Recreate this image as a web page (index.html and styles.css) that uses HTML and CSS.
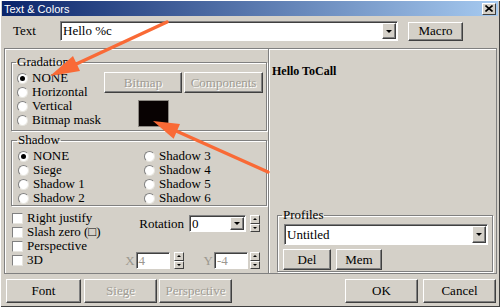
FILE: index.html
```html
<!DOCTYPE html>
<html lang="en">
<head>
    <meta charset="UTF-8">
    <title>Text &amp; Colors</title>
    <link rel="stylesheet" href="styles.css">
</head>
<body>
    <div class="window">
        <div class="titlebar">
            <span>Text &amp; Colors</span>
            <span class="close">
                <svg width="8" height="7" viewBox="0 0 8 7"><path d="M0.5 0.5 L7.5 6.5 M7.5 0.5 L0.5 6.5" stroke="#000" stroke-width="1.6"/></svg>
            </span>
        </div>

        <div class="text-row">
            <label class="text-label">Text</label>
            <div class="combo text-combo">
                <span class="value">Hello %c</span>
                <span class="drop"></span>
            </div>
            <button class="btn macro">Macro</button>
        </div>

        <div class="main">
            <div class="left">
                <fieldset class="group grad">
                    <legend>Gradation</legend>
                    <div class="grad-body">
                        <div class="radios">
                            <div class="opt"><span class="radio on"></span>NONE</div>
                            <div class="opt"><span class="radio"></span>Horizontal</div>
                            <div class="opt"><span class="radio"></span>Vertical</div>
                            <div class="opt"><span class="radio"></span>Bitmap mask</div>
                        </div>
                        <div class="grad-tools">
                            <div class="btn-pair">
                                <button class="btn disabled bitmap">Bitmap</button>
                                <button class="btn disabled components">Components</button>
                            </div>
                            <div class="swatch"></div>
                        </div>
                    </div>
                </fieldset>

                <fieldset class="group shadow">
                    <legend>Shadow</legend>
                    <div class="shadow-grid">
                        <div class="opt"><span class="radio on"></span>NONE</div>
                        <div class="opt"><span class="radio"></span>Shadow 3</div>
                        <div class="opt"><span class="radio"></span>Siege</div>
                        <div class="opt"><span class="radio"></span>Shadow 4</div>
                        <div class="opt"><span class="radio"></span>Shadow 1</div>
                        <div class="opt"><span class="radio"></span>Shadow 5</div>
                        <div class="opt"><span class="radio"></span>Shadow 2</div>
                        <div class="opt"><span class="radio"></span>Shadow 6</div>
                    </div>
                </fieldset>

                <div class="options">
                    <div class="checks">
                        <div class="opt"><span class="check"></span>Right justify</div>
                        <div class="opt"><span class="check"></span>Slash zero (&#9633;)</div>
                        <div class="opt"><span class="check"></span>Perspective</div>
                        <div class="opt"><span class="check"></span>3D</div>
                    </div>
                    <div class="controls">
                        <div class="ctl-row">
                            <span>Rotation</span>
                            <div class="combo rot-combo">
                                <span class="value">0</span>
                                <span class="drop"></span>
                            </div>
                            <div class="spin"><span class="up"></span><span class="down"></span></div>
                        </div>
                        <div class="ctl-row">
                            <span class="dim">X</span>
                            <div class="field xy"><span class="value dim">4</span></div>
                            <div class="spin spin-x"><span class="up"></span><span class="down"></span></div>
                            <span class="dim y-label">Y</span>
                            <div class="field xy"><span class="value dim">-4</span></div>
                            <div class="spin spin-y"><span class="up"></span><span class="down"></span></div>
                        </div>
                    </div>
                </div>
            </div>

            <div class="right">
                <div class="preview">Hello ToCall</div>
                <fieldset class="group profiles">
                    <legend>Profiles</legend>
                    <div class="combo profile-combo">
                        <span class="value">Untitled</span>
                        <span class="drop"></span>
                    </div>
                    <div class="profile-buttons">
                        <button class="btn del">Del</button>
                        <button class="btn mem">Mem</button>
                    </div>
                </fieldset>
            </div>
        </div>

        <div class="footer">
            <div class="btn-group">
                <button class="btn font">Font</button>
                <button class="btn disabled siege">Siege</button>
                <button class="btn disabled persp">Perspective</button>
            </div>
            <div class="btn-group right-group">
                <button class="btn ok">OK</button>
                <button class="btn cancel">Cancel</button>
            </div>
        </div>

        <svg class="annotations" width="500" height="307" viewBox="0 0 500 307">
            <line x1="167" y1="22" x2="72" y2="66" stroke="#f96a36" stroke-width="3.5" stroke-linecap="round"/>
            <polygon points="50,76 80,71 73,56" fill="#f96a36"/>
            <line x1="268" y1="172" x2="174" y2="130" stroke="#f96a36" stroke-width="3.5" stroke-linecap="round"/>
            <polygon points="153,121 173.6,138.7 180,124.1" fill="#f96a36"/>
        </svg>
    </div>
</body>
</html>
```

FILE: styles.css
```css
*{
    margin:0;
    padding:0;
    box-sizing:border-box;
}

body{
    width:500px;
    height:307px;
    overflow:hidden;
    background-color:#d4d0c8;
    font-family:"Liberation Serif", serif;
    font-size:13px;
    line-height:14px;
    color:#000;
}

.window{
    position:relative;
    height:307px;
    padding:1px 2px;
    box-shadow:inset 1px 1px #fff, inset -1px -1px #404040;
}

.titlebar{
    height:15px;
    display:flex;
    align-items:center;
    justify-content:space-between;
    padding:0 2px;
    background:linear-gradient(to right, #0a246a, #a6caf0);
    color:#fff;
    font-family:"Liberation Sans", sans-serif;
    font-size:11px;
}

.close{
    width:14px;
    height:12px;
    display:flex;
    align-items:center;
    justify-content:center;
    background-color:#d4d0c8;
    border:1px solid;
    border-color:#fff #404040 #404040 #fff;
}

/* text row */
.text-row{
    display:flex;
    align-items:center;
    height:20px;
    margin-top:5px;
    padding-left:11px;
}
.text-label{
    width:47px;
}

.combo, .field{
    display:flex;
    background-color:#fff;
    border:1px solid;
    border-color:#808080 #fff #fff #808080;
    box-shadow:inset 1px 1px #404040;
    padding:1px 1px 1px 2px;
}
.combo .value, .field .value{
    flex:1;
    line-height:15px;
    white-space:nowrap;
}
.combo .drop{
    width:14px;
    display:flex;
    align-items:center;
    justify-content:center;
    background-color:#d4d0c8;
    border:1px solid;
    border-color:#fff #404040 #404040 #fff;
    box-shadow:inset -1px -1px #808080;
}
.combo .drop::after{
    content:"";
    border-left:3px solid transparent;
    border-right:3px solid transparent;
    border-top:3px solid #000;
}
.text-combo{
    width:338px;
    height:20px;
}

.btn{
    display:flex;
    align-items:center;
    justify-content:center;
    background-color:#d4d0c8;
    border:1px solid;
    border-color:#fff #404040 #404040 #fff;
    box-shadow:inset -1px -1px #808080;
    font-family:inherit;
    font-size:13px;
    color:#000;
}
.btn.disabled{
    color:#a09c94;
    text-shadow:1px 1px #fff;
}
.macro{
    width:55px;
    height:19px;
    margin-left:10px;
}

/* main area */
.main{
    display:flex;
    width:493px;
    height:226px;
    margin:7px 0 0 2px;
    border:1px solid #808080;
    box-shadow:inset 1px 1px #fff;
}
.left{
    width:264px;
    border-right:1px solid #808080;
    box-shadow:1px 0 #fff;
}

.group{
    border:1px solid #808080;
    box-shadow:1px 1px #fff, inset 1px 1px #fff;
    min-width:0;
}
.group legend{
    padding:0 1px;
    margin-left:-1px;
    line-height:14px;
}

.grad{
    width:256px;
    margin:6px 0 0 6px;
    padding:2px 0 3px 5px;
}
.grad-body{
    display:flex;
}
.radios{
    width:87px;
}
.opt{
    display:flex;
    align-items:center;
    gap:4px;
    height:14px;
    white-space:nowrap;
}
.radio{
    position:relative;
    width:11px;
    height:11px;
    border-radius:50%;
    background-color:#fff;
    border:1px solid;
    border-color:#808080 #e8e6e0 #e8e6e0 #808080;
    flex-shrink:0;
}
.radio.on::after{
    content:"";
    position:absolute;
    left:2px;
    top:2px;
    width:5px;
    height:5px;
    border-radius:50%;
    background-color:#000;
}

.grad-tools{
    padding-top:1px;
}
.btn-pair{
    display:flex;
    gap:2px;
}
.bitmap{
    width:78px;
    height:21px;
}
.components{
    width:79px;
    height:21px;
}
.swatch{
    width:31px;
    height:27px;
    margin:7px 0 0 34px;
    background-color:#080202;
    border:1px solid #8c8882;
}

.shadow{
    width:256px;
    margin:2px 0 0 6px;
    padding:2px 0 0 6px;
}
.shadow-grid{
    display:grid;
    grid-template-columns:126px 1fr;
}

.options{
    display:flex;
    height:58px;
    margin-top:5px;
    padding-left:7px;
}
.checks{
    width:108px;
}
.check{
    width:11px;
    height:11px;
    background-color:#fff;
    border:1px solid;
    border-color:#808080 #e8e6e0 #e8e6e0 #808080;
    flex-shrink:0;
}
.controls{
    flex:1;
    display:flex;
    flex-direction:column;
    align-items:flex-end;
    justify-content:space-between;
    padding:4px 8px 0 0;
}
.ctl-row{
    display:flex;
    align-items:center;
    height:17px;
}
.rot-combo{
    width:57px;
    height:17px;
    margin-left:5px;
    padding:1px 1px 1px 2px;
}
.rot-combo .value{
    line-height:13px;
}
.field.xy{
    width:34px;
    height:17px;
    margin-left:1px;
}
.field.xy .value{
    line-height:13px;
}
.dim{
    color:#9c988f;
}
.y-label{
    margin-left:20px;
}

.spin{
    display:flex;
    flex-direction:column;
    width:10px;
    height:17px;
    margin-left:4px;
}
.spin-y{
    margin-left:2px;
}
.spin span{
    flex:1;
    display:flex;
    align-items:center;
    justify-content:center;
    background-color:#d4d0c8;
    border:1px solid;
    border-color:#fff #404040 #404040 #fff;
}
.spin .up::after{
    content:"";
    border-left:2px solid transparent;
    border-right:2px solid transparent;
    border-bottom:2px solid #000;
}
.spin .down::after{
    content:"";
    border-left:2px solid transparent;
    border-right:2px solid transparent;
    border-top:2px solid #000;
}
.spin-x span::after, .spin-y span::after{
    border-top-color:#9c988f;
    border-bottom-color:#9c988f;
}

/* right side */
.right{
    flex:1;
    display:flex;
    flex-direction:column;
    justify-content:space-between;
    padding:15px 3px 1px 3px;
}
.preview{
    font-size:12px;
    font-weight:bold;
    line-height:14px;
}
.profiles{
    margin-left:5px;
    padding:2px 0 1px 5px;
}
.profile-combo{
    width:204px;
    height:21px;
    margin-left:1px;
}
.profile-combo .value{
    line-height:17px;
}
.profile-buttons{
    display:flex;
    gap:5px;
    margin-top:4px;
}
.del{
    width:48px;
    height:21px;
}
.mem{
    width:46px;
    height:21px;
}

/* footer */
.footer{
    display:flex;
    justify-content:space-between;
    margin-top:5px;
    padding:0 2px 0 4px;
}
.btn-group{
    display:flex;
    gap:2px;
}
.btn-group .btn{
    width:73px;
    height:24px;
}
.btn-group .font{
    width:75px;
    margin-right:1px;
}
.right-group{
    gap:5px;
}

.annotations{
    position:absolute;
    left:0;
    top:0;
    pointer-events:none;
}
```
